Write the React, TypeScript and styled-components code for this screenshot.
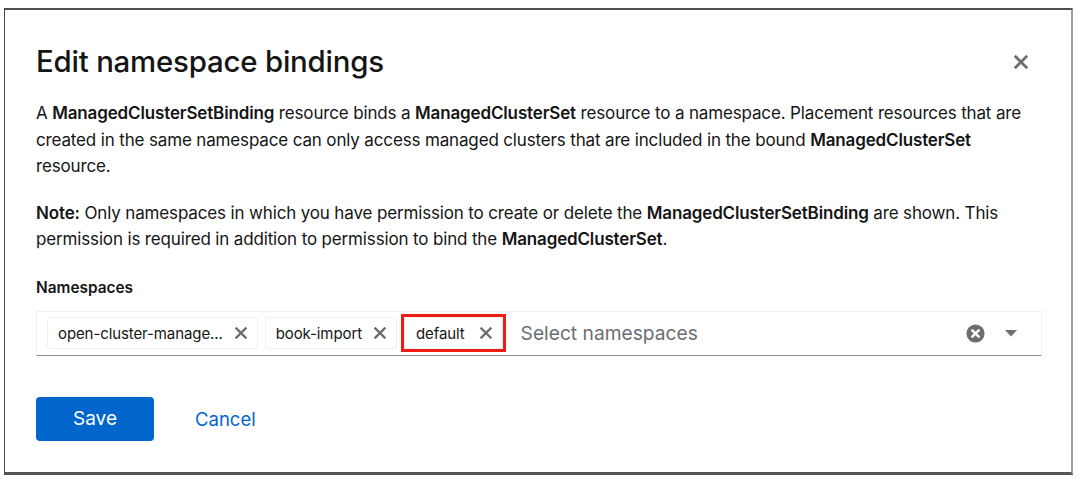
import styled, { createGlobalStyle } from "styled-components";

const GlobalStyle = createGlobalStyle`
  html, body {
    margin: 0;
    padding: 0;
    background: #fff;
  }
  body {
    font-family: "Inter", "Liberation Sans", sans-serif;
    color: #151515;
  }
`;

const Modal = styled.div`
  box-sizing: border-box;
  margin: 8px 0 0 4px;
  width: 1069px;
  height: 467px;
  background: #fff;
  border-style: solid;
  border-color: #4f4f4f #a0a0a0 #555 #4a4a4a;
  border-width: 2px 2px 3px 1px;
  padding: 33px 31px 0 31px;
  display: flex;
  flex-direction: column;
`;

const Header = styled.div`
  display: flex;
  align-items: center;
  justify-content: space-between;
`;

const Title = styled.h1`
  margin: 0;
  font-size: 29.4px;
  line-height: 37px;
  font-weight: 500;
  letter-spacing: -0.2px;
  color: #151515;
`;

const CloseButton = styled.button`
  border: none;
  background: none;
  padding: 0;
  margin-right: 11px;
  width: 16px;
  height: 16px;
  display: flex;
  align-items: center;
  justify-content: center;
  cursor: pointer;
`;

const Text = styled.p`
  margin: 20px 0 0;
  width: 1000px;
  font-size: 17px;
  line-height: 26.5px;
  letter-spacing: -0.15px;

  b {
    font-weight: 600;
  }
`;

const Label = styled.div`
  margin-top: 23px;
  font-size: 15.4px;
  line-height: 23px;
  font-weight: 600;
`;

const Select = styled.div`
  box-sizing: border-box;
  margin-top: 12px;
  width: 1006px;
  height: 45px;
  display: flex;
  align-items: center;
  gap: 7px;
  padding: 0 10px;
  border: 1px solid #f0f0f0;
  border-bottom: 1px solid #8a8d90;
`;

const Highlight = styled.span`
  display: inline-flex;
  margin-right: 3px;
  outline: 3px solid #ee1c12;
`;

const Chip = styled.span<{ $wide?: boolean }>`
  box-sizing: border-box;
  display: inline-flex;
  align-items: center;
  gap: ${(p) => (p.$wide ? "15px" : "12px")};
  height: 32px;
  padding: 0 10px 0 ${(p) => (p.$wide ? "11px" : "10px")};
  border: 1px solid #f0f0f0;
  border-radius: 3px;
  font-size: 15px;
  letter-spacing: -0.1px;
  color: #151515;
`;

const ChipX = styled.span`
  display: inline-flex;
  width: 12px;
  height: 12px;
`;

const Placeholder = styled.span`
  flex: 1;
  margin-left: 8px;
  font-size: 19.2px;
  color: #6a6e73;
`;

const Icons = styled.div`
  display: flex;
  align-items: center;
  gap: 20px;
  margin-right: 14px;
`;

const Actions = styled.div`
  margin-top: 41px;
  display: flex;
  align-items: center;
  gap: 41px;
`;

const SaveButton = styled.button`
  width: 118px;
  height: 44px;
  border: none;
  border-radius: 4px;
  background: #0066cc;
  color: #fff;
  font-family: inherit;
  font-size: 19px;
  cursor: pointer;
`;

const LinkButton = styled.button`
  border: none;
  background: none;
  padding: 0;
  color: #0066cc;
  font-family: inherit;
  font-size: 18.5px;
  cursor: pointer;
`;

const Times = ({ size, color }: { size: number; color: string }) => (
  <svg width={size} height={size} viewBox="0 0 12 12">
    <path d="M1.5 1.5 L10.5 10.5 M10.5 1.5 L1.5 10.5" stroke={color} strokeWidth="2.4" strokeLinecap="square" />
  </svg>
);

const ClearIcon = () => (
  <svg width="19" height="19" viewBox="0 0 20 20">
    <circle cx="10" cy="10" r="9.5" fill="#6a6e73" />
    <path d="M6.6 6.6 L13.4 13.4 M13.4 6.6 L6.6 13.4" stroke="#fff" strokeWidth="2.6" strokeLinecap="round" />
  </svg>
);

const Caret = () => (
  <svg width="12" height="7" viewBox="0 0 12 7">
    <path d="M0 0 H12 L6 6.5 Z" fill="#6a6e73" />
  </svg>
);

const chips = ["open-cluster-manage...", "book-import", "default"];

const NamespaceChip = ({ name, wide }: { name: string; wide?: boolean }) => (
  <Chip $wide={wide}>
    {name}
    <ChipX>
      <Times size={12} color="#6a6e73" />
    </ChipX>
  </Chip>
);

const App = () => (
  <>
    <GlobalStyle />
    <Modal>
      <Header>
        <Title>Edit namespace bindings</Title>
        <CloseButton aria-label="Close">
          <Times size={14} color="#6a6e73" />
        </CloseButton>
      </Header>
      <Text>
        A <b>ManagedClusterSetBinding</b> resource binds a <b>ManagedClusterSet</b> resource to a namespace. Placement
        resources that are created in the same namespace can only access managed clusters that are included in the
        bound <b>ManagedClusterSet</b> resource.
      </Text>
      <Text>
        <b>Note:</b> Only namespaces in which you have permission to create or delete the{" "}
        <b>ManagedClusterSetBinding</b> are shown. This permission is required in addition to permission to bind the{" "}
        <b>ManagedClusterSet</b>.
      </Text>
      <Label>Namespaces</Label>
      <Select>
        {chips.map((c) =>
          c === "default" ? (
            <Highlight key={c}>
              <NamespaceChip name={c} wide />
            </Highlight>
          ) : (
            <NamespaceChip key={c} name={c} />
          )
        )}
        <Placeholder>Select namespaces</Placeholder>
        <Icons>
          <ClearIcon />
          <Caret />
        </Icons>
      </Select>
      <Actions>
        <SaveButton>Save</SaveButton>
        <LinkButton>Cancel</LinkButton>
      </Actions>
    </Modal>
  </>
);

export default App;
